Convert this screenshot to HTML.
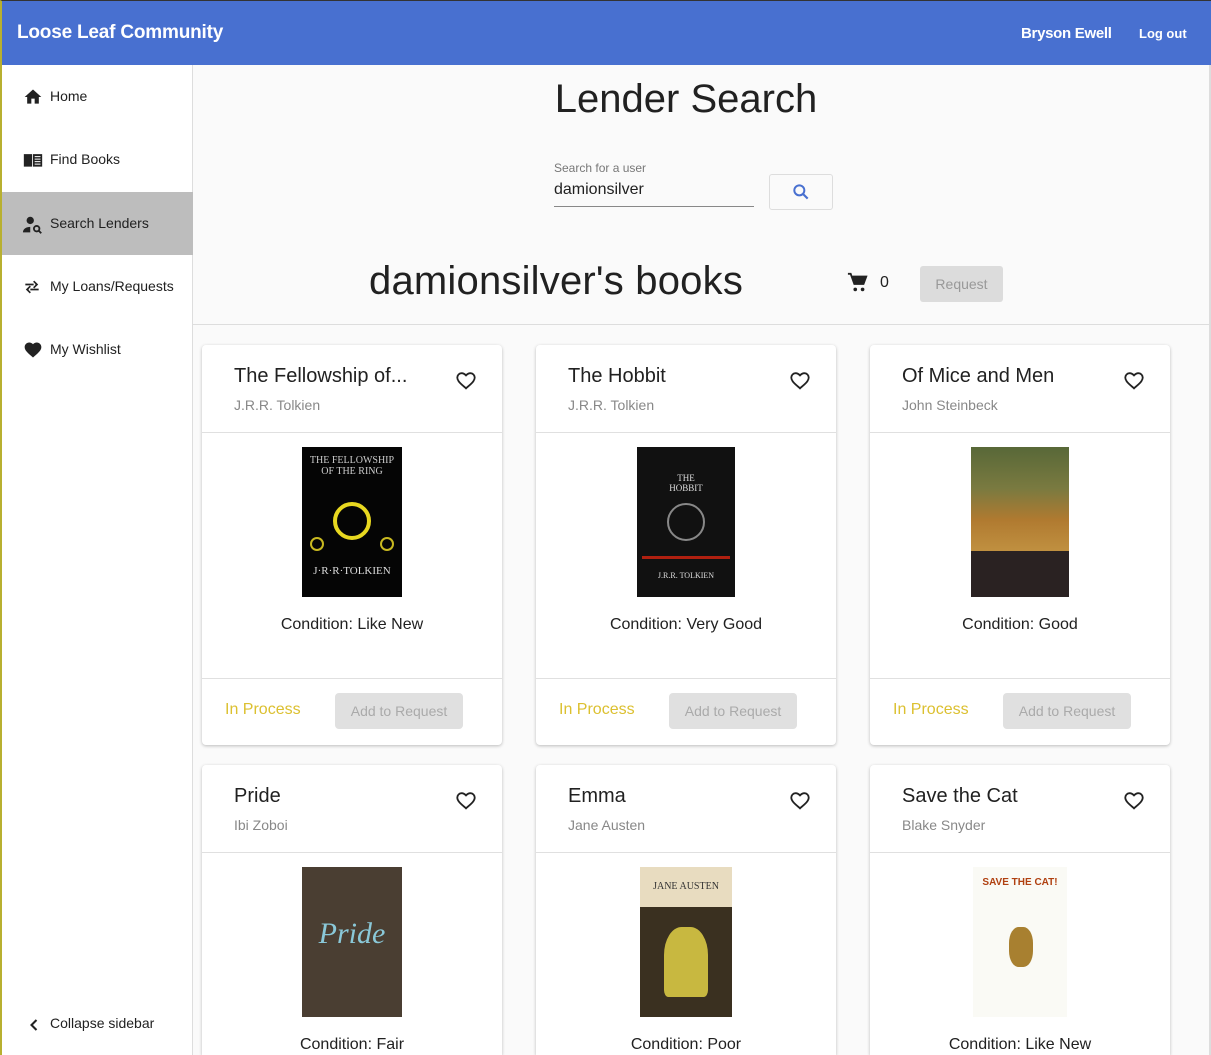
<!DOCTYPE html>
<html style="overflow:hidden;height:1055px"><head><style>
*{box-sizing:border-box;margin:0;padding:0}
body{width:1211px;height:1055px;overflow:hidden;font-family:"Liberation Sans",Roboto,sans-serif;background:#fafafa;position:relative;color:#212121}
.top{position:absolute;left:0;top:0;width:1211px;height:65px;background:#4870d0;border-top:1px solid #333;border-left:2px solid #b8b030}
.top .t{position:absolute;left:15px;top:21px;color:#fff;font-size:19px;font-weight:bold;letter-spacing:-0.2px}
.top .u{position:absolute;left:1019px;top:24px;color:#fff;font-size:15px;font-weight:bold;letter-spacing:-0.3px}
.top .l{position:absolute;left:1137px;top:25px;color:#fff;font-size:13px;font-weight:bold}
.side{position:absolute;left:0;top:65px;width:193px;height:990px;background:#fff;border-left:2px solid #b8b030;border-right:1px solid #ddd}
.it{position:absolute;left:0;width:191px;height:63px;font-size:14px}
.it span{position:absolute;left:48px;top:23px}
.it svg{position:absolute;left:20px;top:22px}
.main{position:absolute;left:193px;top:65px;width:1016px;height:990px;overflow:hidden}
h1{position:absolute;left:0;width:986px;text-align:center;top:12px;font-size:40px;font-weight:normal;color:#212121}
.card{position:absolute;width:300px;height:400px;background:#fff;border-radius:4px;box-shadow:0 1px 3px rgba(0,0,0,.25)}
.r2{height:290px;border-radius:4px 4px 0 0}
.card .ti{position:absolute;left:32px;top:20px;font-size:20px}
.card .au{position:absolute;left:32px;top:52px;font-size:14px;color:#888}
.card .hr{position:absolute;left:0;right:0;top:87px;border-top:1px solid #e0e0e0}
.card .hr2{position:absolute;left:0;right:0;top:333px;border-top:1px solid #e0e0e0}
.card .hv{position:absolute;left:253px;top:25px}
.card .cv{position:absolute;left:100px;top:102px;width:100px;height:150px}
.card .co{position:absolute;left:0;right:0;top:271px;text-align:center;font-size:16px}
.card .ip{position:absolute;left:23px;top:356px;color:#dcc030;font-size:16px}
.card .ab{position:absolute;left:133px;top:348px;width:128px;height:36px;background:#e0e0e0;border-radius:4px;color:#aaa;font-size:14px;text-align:center;line-height:36px}
</style></head><body>
<div class="top"><div class="t">Loose Leaf Community</div><div class="u">Bryson Ewell</div><div class="l">Log out</div></div>
<div class="side">
<div class="it" style="top:0"><svg width="22" height="20" viewBox="0 0 24 24"><path d="M10 20v-6h4v6h5v-8h3L12 3 2 12h3v8z" fill="#222"/></svg><span>Home</span></div>
<div class="it" style="top:63px"><svg width="22" height="20" viewBox="0 0 24 24"><path d="M1 5h10v15H1zM12 5h11v15H12z" fill="#222"/><path d="M14 8h7M14 11h7M14 14h7M14 17h7" stroke="#fff" stroke-width="1.2"/></svg><span>Find Books</span></div>
<div class="it" style="top:127px;background:#bdbdbd"><svg width="22" height="22" viewBox="0 0 24 24"><circle cx="9" cy="7" r="4" fill="#222"/><path d="M1 20c0-4 4-6 8-6v6z" fill="#222"/><circle cx="16" cy="16" r="3" fill="none" stroke="#222" stroke-width="2"/><path d="M18 18l3 3" stroke="#222" stroke-width="2"/></svg><span>Search Lenders</span></div>
<div class="it" style="top:190px"><svg width="20" height="20" viewBox="0 0 24 24"><path d="M4 9h10M16 9h2M14 5l4 4-4 4M20 15H10M8 15H6M10 11l-4 4 4 4" stroke="#222" stroke-width="2" fill="none"/></svg><span>My Loans/Requests</span></div>
<div class="it" style="top:253px"><svg width="22" height="20" viewBox="0 0 24 24"><path d="M12 21l-1.5-1.3C5 15 2 12 2 8.5 2 5.5 4.5 3 7.5 3c1.7 0 3.4.8 4.5 2.1C13.1 3.8 14.8 3 16.5 3 19.5 3 22 5.5 22 8.5c0 3.5-3 6.5-8.5 11.2z" fill="#222"/></svg><span>My Wishlist</span></div>
<div class="it" style="top:928px"><svg width="20" height="20" viewBox="0 0 24 24" style="left:22px"><path d="M15 6l-6 6 6 6" stroke="#222" stroke-width="2.5" fill="none"/></svg><span style="top:22px">Collapse sidebar</span></div>
</div>
<div class="main">
<h1>Lender Search</h1>
<div style="position:absolute;left:361px;top:96px;font-size:12px;color:#777">Search for a user</div>
<div style="position:absolute;left:361px;top:116px;font-size:16px">damionsilver</div>
<div style="position:absolute;left:361px;top:141px;width:200px;border-top:1px solid #888"></div>
<div style="position:absolute;left:576px;top:109px;width:64px;height:36px;border:1px solid #ddd;border-radius:3px;background:#fafafa"><svg style="position:absolute;left:21px;top:7px" width="20" height="20" viewBox="0 0 24 24"><circle cx="10" cy="10" r="6" fill="none" stroke="#4870d0" stroke-width="2.4"/><path d="M14 14l6 6" stroke="#4870d0" stroke-width="2.6"/></svg></div>
<div style="position:absolute;left:176px;top:194px;font-size:40px;letter-spacing:0.2px">damionsilver's books</div>
<svg style="position:absolute;left:654px;top:207px" width="22" height="22" viewBox="0 0 24 24"><path d="M1 2h3l4 11h10l3-8H6" fill="none" stroke="#222" stroke-width="2"/><path d="M6 5h15l-3 8H8z" fill="#222"/><circle cx="9" cy="19" r="2" fill="#222"/><circle cx="17" cy="19" r="2" fill="#222"/></svg>
<div style="position:absolute;left:687px;top:209px;font-size:16px">0</div>
<div style="position:absolute;left:727px;top:201px;width:83px;height:36px;background:#dcdcdc;border-radius:3px;color:#999;font-size:14px;text-align:center;line-height:36px">Request</div>
<div style="position:absolute;left:0;right:0;top:259px;border-top:1px solid #ddd"></div>

<div class="card" style="left:9px;top:280px"><div class="ti">The Fellowship of...</div><div class="au">J.R.R. Tolkien</div><svg class="hv" width="22" height="22" viewBox="0 0 24 24"><path d="M12 20l-1.3-1.2C5.5 14.5 2.5 11.6 2.5 8.2 2.5 5.6 4.6 3.5 7.2 3.5c1.6 0 3.3.8 4.8 2.4 1.5-1.6 3.2-2.4 4.8-2.4 2.6 0 4.7 2.1 4.7 4.7 0 3.4-3 6.3-8.2 10.6z" fill="none" stroke="#222" stroke-width="2"/></svg><div class="hr"></div><div class="cv" style="background:#050505"><div style="position:absolute;left:31px;top:55px;width:38px;height:38px;border:4px solid #e8d820;border-radius:50%"></div><div style="position:absolute;left:8px;top:90px;width:14px;height:14px;border:2px solid #c8b820;border-radius:50%"></div><div style="position:absolute;left:78px;top:90px;width:14px;height:14px;border:2px solid #c8b820;border-radius:50%"></div><div style="position:absolute;top:8px;width:100%;text-align:center;color:#ccc;font-size:10px;font-family:'Liberation Serif'">THE FELLOWSHIP<br>OF THE RING</div><div style="position:absolute;top:118px;width:100%;text-align:center;color:#ddd;font-size:11px;font-family:'Liberation Serif'">J·R·R·TOLKIEN</div></div><div class="co">Condition: Like New</div><div class="hr2"></div><div class="ip">In Process</div><div class="ab">Add to Request</div></div>

<div class="card" style="left:343px;top:280px"><div class="ti">The Hobbit</div><div class="au">J.R.R. Tolkien</div><svg class="hv" width="22" height="22" viewBox="0 0 24 24"><path d="M12 20l-1.3-1.2C5.5 14.5 2.5 11.6 2.5 8.2 2.5 5.6 4.6 3.5 7.2 3.5c1.6 0 3.3.8 4.8 2.4 1.5-1.6 3.2-2.4 4.8-2.4 2.6 0 4.7 2.1 4.7 4.7 0 3.4-3 6.3-8.2 10.6z" fill="none" stroke="#222" stroke-width="2"/></svg><div class="hr"></div><div class="cv" style="background:#111;width:98px;left:101px"><div style="position:absolute;left:30px;top:56px;width:38px;height:38px;border:2px solid #888;border-radius:50%"></div><div style="position:absolute;top:26px;width:100%;text-align:center;color:#ddd;font-size:9px;font-family:'Liberation Serif'">THE<br>HOBBIT</div><div style="position:absolute;left:5px;top:92px;width:88px;height:20px;border-bottom:3px solid #b02010"></div><div style="position:absolute;top:124px;width:100%;text-align:center;color:#ddd;font-size:8px;font-family:'Liberation Serif'">J.R.R. TOLKIEN</div></div><div class="co">Condition: Very Good</div><div class="hr2"></div><div class="ip">In Process</div><div class="ab">Add to Request</div></div>

<div class="card" style="left:677px;top:280px"><div class="ti">Of Mice and Men</div><div class="au">John Steinbeck</div><svg class="hv" width="22" height="22" viewBox="0 0 24 24"><path d="M12 20l-1.3-1.2C5.5 14.5 2.5 11.6 2.5 8.2 2.5 5.6 4.6 3.5 7.2 3.5c1.6 0 3.3.8 4.8 2.4 1.5-1.6 3.2-2.4 4.8-2.4 2.6 0 4.7 2.1 4.7 4.7 0 3.4-3 6.3-8.2 10.6z" fill="none" stroke="#222" stroke-width="2"/></svg><div class="hr"></div><div class="cv" style="background:#2a2222;width:98px;left:101px"><div style="height:104px;background:linear-gradient(#586838 0,#7a7a40 40%,#b07a30 70%,#c09040)"></div></div><div class="co">Condition: Good</div><div class="hr2"></div><div class="ip">In Process</div><div class="ab">Add to Request</div></div>

<div class="card r2" style="left:9px;top:700px"><div class="ti">Pride</div><div class="au">Ibi Zoboi</div><svg class="hv" width="22" height="22" viewBox="0 0 24 24"><path d="M12 20l-1.3-1.2C5.5 14.5 2.5 11.6 2.5 8.2 2.5 5.6 4.6 3.5 7.2 3.5c1.6 0 3.3.8 4.8 2.4 1.5-1.6 3.2-2.4 4.8-2.4 2.6 0 4.7 2.1 4.7 4.7 0 3.4-3 6.3-8.2 10.6z" fill="none" stroke="#222" stroke-width="2"/></svg><div class="hr"></div><div class="cv" style="background:#4a3e32"><div style="position:absolute;top:50px;width:100%;text-align:center;color:#8ac8d8;font-size:30px;font-style:italic;font-family:'Liberation Serif'">Pride</div></div><div class="co">Condition: Fair</div></div>

<div class="card r2" style="left:343px;top:700px"><div class="ti">Emma</div><div class="au">Jane Austen</div><svg class="hv" width="22" height="22" viewBox="0 0 24 24"><path d="M12 20l-1.3-1.2C5.5 14.5 2.5 11.6 2.5 8.2 2.5 5.6 4.6 3.5 7.2 3.5c1.6 0 3.3.8 4.8 2.4 1.5-1.6 3.2-2.4 4.8-2.4 2.6 0 4.7 2.1 4.7 4.7 0 3.4-3 6.3-8.2 10.6z" fill="none" stroke="#222" stroke-width="2"/></svg><div class="hr"></div><div class="cv" style="background:#3a3020;width:92px;left:104px"><div style="height:40px;background:#e8dcc0;color:#333;font-size:10px;text-align:center;padding-top:14px;font-family:'Liberation Serif'">JANE AUSTEN</div><div style="position:absolute;left:24px;top:60px;width:44px;height:70px;background:#c8b840;border-radius:40% 40% 10% 10%"></div></div><div class="co">Condition: Poor</div></div>

<div class="card r2" style="left:677px;top:700px"><div class="ti">Save the Cat</div><div class="au">Blake Snyder</div><svg class="hv" width="22" height="22" viewBox="0 0 24 24"><path d="M12 20l-1.3-1.2C5.5 14.5 2.5 11.6 2.5 8.2 2.5 5.6 4.6 3.5 7.2 3.5c1.6 0 3.3.8 4.8 2.4 1.5-1.6 3.2-2.4 4.8-2.4 2.6 0 4.7 2.1 4.7 4.7 0 3.4-3 6.3-8.2 10.6z" fill="none" stroke="#222" stroke-width="2"/></svg><div class="hr"></div><div class="cv" style="background:#fafaf5;width:94px;left:103px"><div style="position:absolute;top:10px;width:100%;text-align:center;color:#b04010;font-size:10px;font-weight:bold">SAVE THE CAT!</div><div style="position:absolute;left:36px;top:60px;width:24px;height:40px;background:#a88030;border-radius:40%"></div></div><div class="co">Condition: Like New</div></div>
</div>
<div style="position:absolute;left:1209px;top:65px;width:2px;height:990px;background:#ddd"></div>
</body></html>
